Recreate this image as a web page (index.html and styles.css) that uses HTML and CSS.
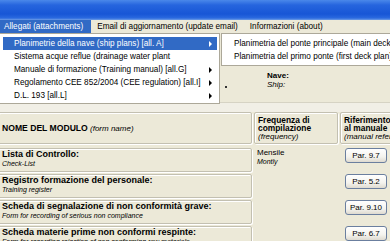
FILE: index.html
```html
<!DOCTYPE html>
<html lang="it">
<head>
    <meta charset="UTF-8">
    <meta name="viewport" content="width=device-width, initial-scale=1.0">
    <title>Allegati</title>
    <link rel="stylesheet" href="styles.css">
</head>
<body>
    <div class="window">
        <div class="titlebar"></div>
        <div class="menubar">
            <span class="menu-item active">Allegati (attachments)</span>
            <span class="menu-item">Email di aggiornamento (update email)</span>
            <span class="menu-item">Informazioni (about)</span>
        </div>

        <div class="form">
            <div class="ship">
                <span class="dot"></span>
                <div class="stack ship-label">
                    <b>Nave:</b>
                    <i>Ship:</i>
                </div>
            </div>
            <div class="strip"></div>

            <div class="row head">
                <div class="cell box">
                    <span><b>NOME DEL MODULO</b> <i>(form name)</i></span>
                </div>
                <div class="cell box stack">
                    <b>Frequenza di</b>
                    <b>compilazione</b>
                    <i>(frequency)</i>
                </div>
                <div class="cell box stack">
                    <b>Riferimento</b>
                    <b>al manuale</b>
                    <i>(manual reference)</i>
                </div>
            </div>

            <div class="row">
                <div class="cell box stack">
                    <b>Lista di Controllo:</b>
                    <i>Check-List</i>
                </div>
                <div class="cell stack freq">
                    <span>Mensile</span>
                    <i>Montly</i>
                </div>
                <div class="cell"><button class="par">Par. 9.7</button></div>
            </div>

            <div class="row">
                <div class="cell box stack">
                    <b>Registro formazione del personale:</b>
                    <i>Training register</i>
                </div>
                <div class="cell"></div>
                <div class="cell"><button class="par">Par. 5.2</button></div>
            </div>

            <div class="row">
                <div class="cell box stack">
                    <b>Scheda di segnalazione di non conformità grave:</b>
                    <i>Form for recording of serious non compliance</i>
                </div>
                <div class="cell"></div>
                <div class="cell"><button class="par">Par. 9.10</button></div>
            </div>

            <div class="row">
                <div class="cell box stack">
                    <b>Scheda materie prime non conformi respinte:</b>
                    <i>Form for recording rejection of non conforming raw materials</i>
                </div>
                <div class="cell"></div>
                <div class="cell"><button class="par">Par. 6.7</button></div>
            </div>
        </div>

        <!-- open menu -->
        <div class="dropdown">
            <div class="drop-item selected">Planimetrie della nave (ship plans) [all. A]<span class="arrow"></span></div>
            <div class="drop-item">Sistema acque reflue (drainage water plant</div>
            <div class="drop-item">Manuale di formazione (Training manual) [all.G]<span class="arrow"></span></div>
            <div class="drop-item">Regolamento CEE 852/2004 (CEE regulation) [all.I]<span class="arrow"></span></div>
            <div class="drop-item">D.L. 193 [all.L]<span class="arrow"></span></div>
        </div>
        <div class="submenu">
            <div class="drop-item">Planimetria del ponte principale (main deck plan)</div>
            <div class="drop-item">Planimetria del primo ponte (first deck plan)</div>
        </div>
    </div>
</body>
</html>
```

FILE: styles.css
```css
body {
    margin: 0;
    font-family: "Liberation Sans", Arial, sans-serif;
    font-size: 8px;
    color: #000;
}

.window {
    position: relative;
    width: 390px;
    height: 241px;
    overflow: hidden;
    background-color: #ECE9D8;
}

.titlebar {
    height: 20px;
    background: linear-gradient(#4A88EA, #2665DE 25%, #1756D6 70%, #2A69DF 90%, #6E9DE6);
}

.menubar {
    display: flex;
    height: 13px;
    line-height: 13px;
    font-size: 8.2px;
    background-color: #ECE9D8;
    white-space: nowrap;
}

.menu-item {
    padding: 0 6px;
}

.menu-item.active {
    padding: 0 8px 0 4px;
    background-color: #316AC5;
    color: #fff;
}

.stack {
    display: flex;
    flex-direction: column;
    line-height: 9px;
    white-space: nowrap;
}

/* ship header */
.ship {
    display: flex;
    height: 70px;
    box-sizing: border-box;
    border-bottom: 1px solid #D6D3C4;
}

.dot {
    width: 2px;
    height: 2px;
    margin: 53px 0 0 225px;
    background-color: #333;
}

.ship-label {
    margin: 38px 0 0 40px;
}

.strip {
    height: 9px;
    background-color: #F1EFE6;
}

/* table */
.row {
    display: grid;
    grid-template-columns: 254px 84px 60px;
    column-gap: 2px;
    height: 24px;
    margin: 2px 0 0 -2px;
}

.row.head {
    height: 32px;
    margin: 0 0 4px -2px;
}

.cell {
    box-sizing: border-box;
    overflow: hidden;
    white-space: nowrap;
}

.box {
    border: 1px solid #C3C0B1;
    border-radius: 2px;
    box-shadow: inset 1px 1px 0 #fff, 1px 1px 0 #fff;
    padding: 1px 2px 0 3px;
}

.row b {
    font-size: 9px;
}

.row i {
    font-size: 7px;
}

.head .cell {
    display: flex;
    align-items: center;
    padding-top: 0;
}

.head .stack {
    flex-direction: column;
    align-items: flex-start;
    justify-content: center;
    line-height: 8.5px;
    padding-top: 1px;
}

.row.head b {
    font-size: 8.4px;
}

.row.head i {
    font-size: 8px;
}

.head .cell:first-child b {
    font-size: 8.6px;
}

.freq {
    padding: 0 0 0 3px;
}

.par {
    display: block;
    width: 42px;
    height: 15px;
    margin-left: 5px;
    padding: 0;
    font-family: inherit;
    font-size: 8px;
    color: #000;
    border: 1px solid #6B7F9F;
    border-radius: 3px;
    background: linear-gradient(#FFFFFF, #F4F3EE 60%, #DEDAD0);
}

/* menus */
.dropdown,
.submenu {
    position: absolute;
    top: 33px;
    padding: 3px 2px 1px;
    font-size: 8.2px;
    background-color: #fff;
    border: 1px solid #ACA899;
    white-space: nowrap;
    overflow: hidden;
}

.dropdown {
    left: 0;
    width: 214px;
    border-left: none;
    padding-left: 3px;
}

.submenu {
    left: 221px;
    width: 200px;
    padding-bottom: 2px;
}

.drop-item {
    display: flex;
    justify-content: space-between;
    align-items: center;
    height: 13px;
    line-height: 13px;
    padding: 0 5px 0 11px;
}

.submenu .drop-item {
    padding-left: 10px;
}

.drop-item.selected {
    background-color: #316AC5;
    color: #fff;
}

.arrow {
    width: 0;
    height: 0;
    border-left: 3px solid #000;
    border-top: 3px solid transparent;
    border-bottom: 3px solid transparent;
}

.selected .arrow {
    border-left-color: #fff;
}
```
